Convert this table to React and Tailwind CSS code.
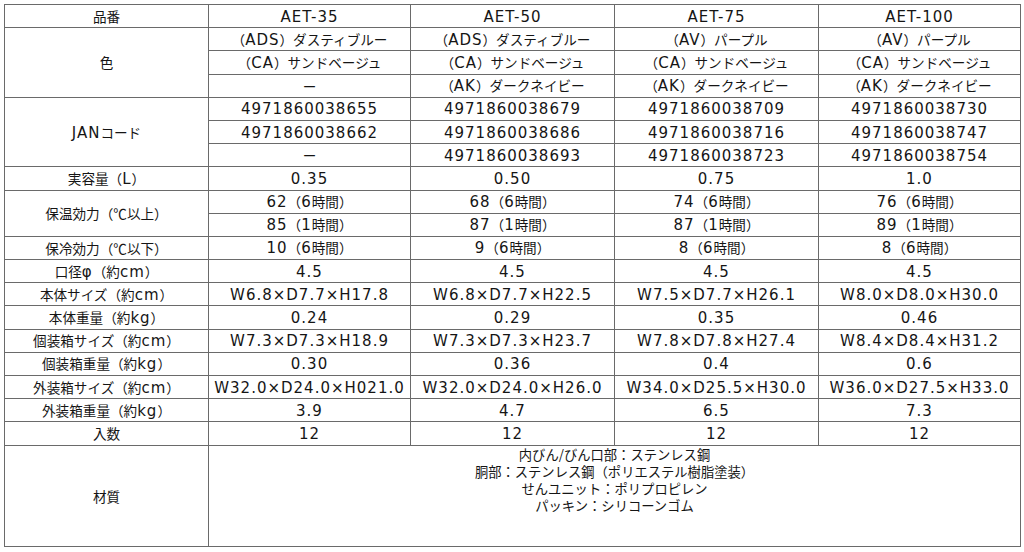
import React from "react";

const CJK_SPLIT = /([\u2100-\u21ff\u3000-\u30ff\u3400-\u9fff\uff00-\uffef]+)/;
const CJK_TEST = /^[\u2100-\u21ff\u3000-\u30ff\u3400-\u9fff\uff00-\uffef]+$/;

function Txt({ s }) {
  return s
    .split(CJK_SPLIT)
    .filter(Boolean)
    .map((p, i) =>
      CJK_TEST.test(p) ? (
        <span key={i} className="font-['Noto_Sans_CJK_JP',sans-serif] text-[13.6px]">
          {p}
        </span>
      ) : (
        <span key={i} className="font-['DejaVu_Sans','Noto_Sans_CJK_JP',sans-serif] text-[15px] tracking-[1px]">
          {p}
        </span>
      )
    );
}

const cell = "border border-[#6a6a6a] text-center align-middle p-0 h-[23.2px] leading-[20px] text-[#151515] whitespace-nowrap";

function Row({ label, values, labelSpan }) {
  return (
    <tr>
      {label !== undefined && (
        <td className={cell} rowSpan={labelSpan || 1}>
          <Txt s={label} />
        </td>
      )}
      {values.map((v, i) => (
        <td key={i} className={cell}>
          <Txt s={v} />
        </td>
      ))}
    </tr>
  );
}

export default function App() {
  const materials = [
    "内びん/びん口部：ステンレス鋼",
    "胴部：ステンレス鋼（ポリエステル樹脂塗装）",
    "せんユニット：ポリプロピレン",
    "パッキン：シリコーンゴム",
  ];
  return (
    <div className="w-[1024px] h-[552px] bg-white pt-[4px] pl-[4px]">
      <table className="table-fixed border-collapse w-[1016px]">
        <colgroup>
          <col className="w-[204px]" />
          <col className="w-[202px]" />
          <col className="w-[204px]" />
          <col className="w-[204px]" />
          <col className="w-[202px]" />
        </colgroup>
        <tbody>
          <Row label="品番" values={["AET-35", "AET-50", "AET-75", "AET-100"]} />
          <Row label="色" labelSpan={3} values={["（ADS）ダスティブルー", "（ADS）ダスティブルー", "（AV）パープル", "（AV）パープル"]} />
          <Row values={["（CA）サンドベージュ", "（CA）サンドベージュ", "（CA）サンドベージュ", "（CA）サンドベージュ"]} />
          <Row values={["ー", "（AK）ダークネイビー", "（AK）ダークネイビー", "（AK）ダークネイビー"]} />
          <Row label="JANコード" labelSpan={3} values={["4971860038655", "4971860038679", "4971860038709", "4971860038730"]} />
          <Row values={["4971860038662", "4971860038686", "4971860038716", "4971860038747"]} />
          <Row values={["ー", "4971860038693", "4971860038723", "4971860038754"]} />
          <Row label="実容量（L）" values={["0.35", "0.50", "0.75", "1.0"]} />
          <Row label="保温効力（℃以上）" labelSpan={2} values={["62（6時間）", "68（6時間）", "74（6時間）", "76（6時間）"]} />
          <Row values={["85（1時間）", "87（1時間）", "87（1時間）", "89（1時間）"]} />
          <Row label="保冷効力（℃以下）" values={["10（6時間）", "9（6時間）", "8（6時間）", "8（6時間）"]} />
          <Row label="口径φ（約cm）" values={["4.5", "4.5", "4.5", "4.5"]} />
          <Row label="本体サイズ（約cm）" values={["W6.8×D7.7×H17.8", "W6.8×D7.7×H22.5", "W7.5×D7.7×H26.1", "W8.0×D8.0×H30.0"]} />
          <Row label="本体重量（約kg）" values={["0.24", "0.29", "0.35", "0.46"]} />
          <Row label="個装箱サイズ（約cm）" values={["W7.3×D7.3×H18.9", "W7.3×D7.3×H23.7", "W7.8×D7.8×H27.4", "W8.4×D8.4×H31.2"]} />
          <Row label="個装箱重量（約kg）" values={["0.30", "0.36", "0.4", "0.6"]} />
          <Row label="外装箱サイズ（約cm）" values={["W32.0×D24.0×H021.0", "W32.0×D24.0×H26.0", "W34.0×D25.5×H30.0", "W36.0×D27.5×H33.0"]} />
          <Row label="外装箱重量（約kg）" values={["3.9", "4.7", "6.5", "7.3"]} />
          <Row label="入数" values={["12", "12", "12", "12"]} />
          <tr>
            <td className="border border-[#6a6a6a] text-center align-middle p-0 h-[101.3px] text-[#151515]">
              <Txt s="材質" />
            </td>
            <td colSpan={4} className="border border-[#6a6a6a] text-center align-top p-0 h-[101.3px] text-[#151515]">
              <div className="flex flex-col items-center">
                {materials.map((m, i) => (
                  <div key={i} className="leading-[17.3px] h-[17.3px] font-['Noto_Sans_CJK_JP',sans-serif] text-[13.3px] whitespace-nowrap">
                    {m}
                  </div>
                ))}
              </div>
            </td>
          </tr>
        </tbody>
      </table>
    </div>
  );
}
